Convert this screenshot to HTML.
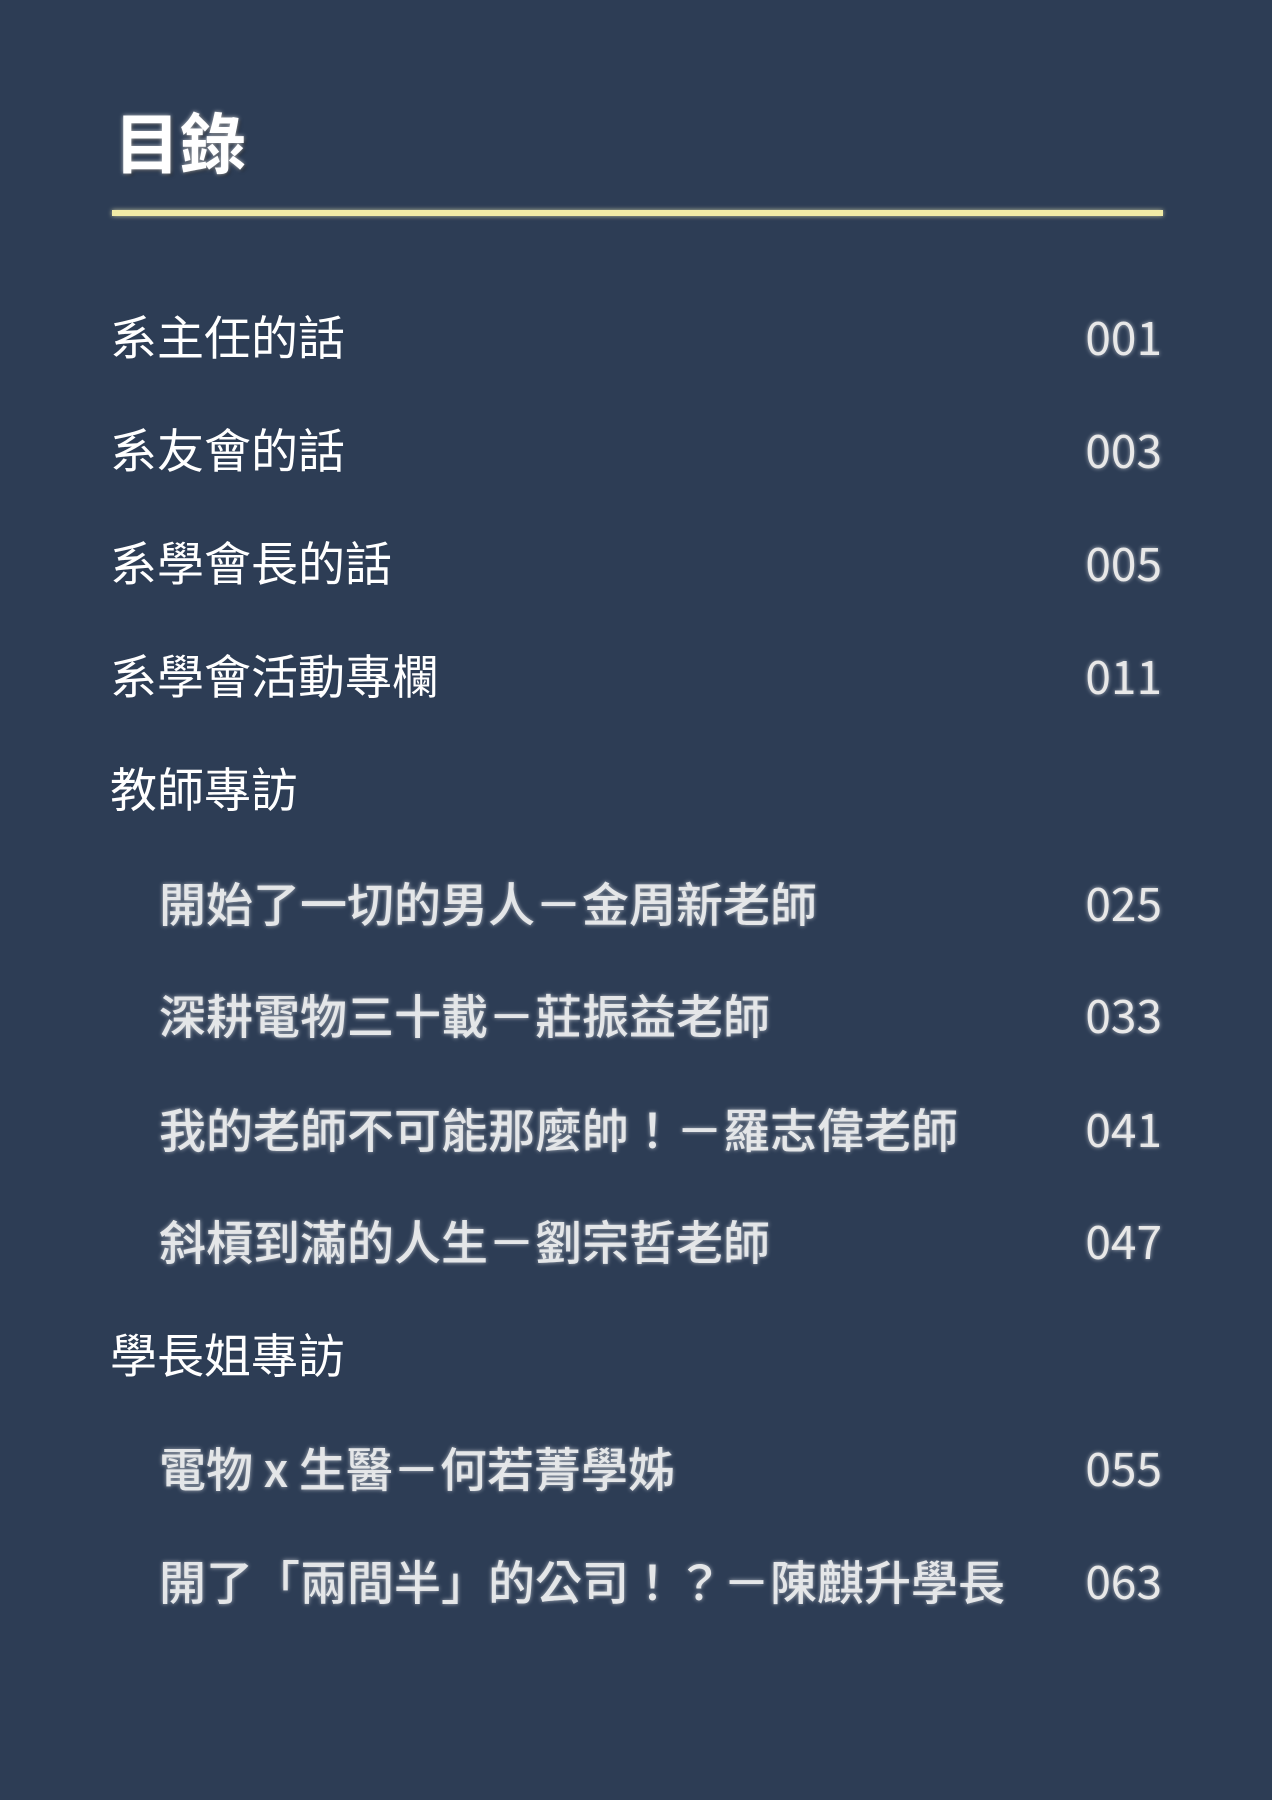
<!DOCTYPE html>
<html><head><meta charset="utf-8"><style>
html,body{margin:0;padding:0}
body{width:1272px;height:1800px;background:#2d3d55;position:relative;overflow:hidden;font-family:"Liberation Sans","Noto Sans CJK TC",sans-serif}
.t{position:absolute;left:114px;top:100px;font-size:66px;font-weight:bold;color:#fff;line-height:90px;text-shadow:0 0 4px rgba(255,255,255,.7),2px 2px 3px rgba(0,0,0,.5)}
.bar{position:absolute;left:112px;width:1051px;top:210px;height:6px;background:#f1eba6;box-shadow:0 0 5px rgba(255,250,190,.7)}
.r{position:absolute;left:110px;width:1052px;height:60px;line-height:60px;font-size:47px;color:#fff}
.r.s{left:159px;width:1003px;font-size:47px;margin-top:-3px;color:#e4e6e8;font-family:"Noto Sans CJK TC",sans-serif;font-weight:500;text-shadow:0 0 4px rgba(255,255,255,.6)}
.r b{position:absolute;right:0;top:-3px;font-family:"Noto Sans CJK TC",sans-serif;font-weight:400;font-size:46px;color:#e8e8e8;text-shadow:0 0 4px rgba(255,255,255,.6)}
.r.s b{top:0}
</style></head><body>
<div class="t">目錄</div>
<div class="bar"></div>
<div class="r" style="top:309px">系主任的話<b>001</b></div>
<div class="r" style="top:422px">系友會的話<b>003</b></div>
<div class="r" style="top:535px">系學會長的話<b>005</b></div>
<div class="r" style="top:648px">系學會活動專欄<b>011</b></div>
<div class="r" style="top:761px">教師專訪</div>
<div class="r s" style="top:875px">開始了一切的男人－金周新老師<b>025</b></div>
<div class="r s" style="top:987px">深耕電物三十載－莊振益老師<b>033</b></div>
<div class="r s" style="top:1101px">我的老師不可能那麼帥！－羅志偉老師<b>041</b></div>
<div class="r s" style="top:1213px">斜槓到滿的人生－劉宗哲老師<b>047</b></div>
<div class="r" style="top:1327px">學長姐專訪</div>
<div class="r s" style="top:1440px">電物 x 生醫－何若菁學姊<b>055</b></div>
<div class="r s" style="top:1553px">開了「兩間半」的公司！？－陳麒升學長<b>063</b></div>
</body></html>
